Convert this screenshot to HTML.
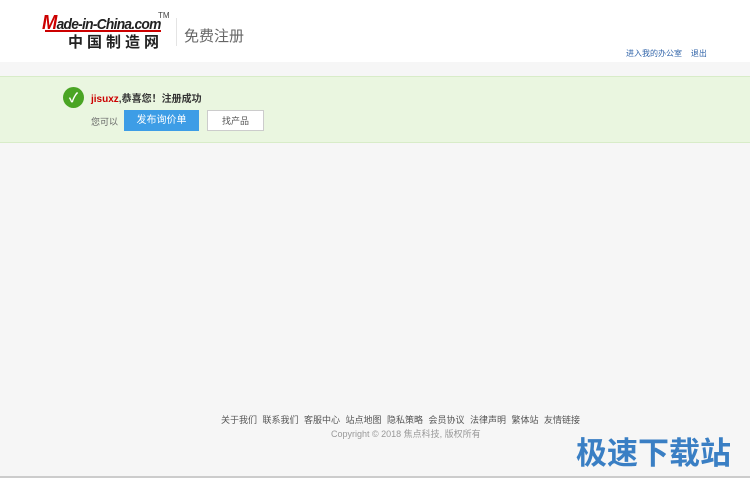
<!DOCTYPE html>
<html><head><meta charset="utf-8"><style>
body{margin:0;width:750px;height:478px;background:#f6f6f6;font-family:"Liberation Sans","Noto Sans CJK SC",sans-serif;position:relative;overflow:hidden}
.hd{position:absolute;left:0;top:0;width:750px;height:62px;background:#fff}
.a{position:absolute;white-space:nowrap}
.band{position:absolute;left:0;top:76px;width:750px;height:65px;background:#eaf6e0;border-top:1px solid #d8ecc8;border-bottom:1px solid #d8ecc8}
</style></head><body>
<div class="hd">
 <div class="a" style="left:42px;top:12px;font:italic bold 15px 'Liberation Sans';color:#222;letter-spacing:-0.8px;transform:scaleX(0.92);transform-origin:left"><span style="color:#c00;font-size:20px">M</span>ade-in-China.com</div>
 <div class="a" style="left:158px;top:11px;font-size:8px;color:#444">TM</div>
 <div class="a" style="left:45px;top:30px;width:116px;height:2px;background:#c00"></div>
 <div class="a" style="left:68px;top:31px;font-size:15px;font-weight:bold;color:#222;letter-spacing:4px">中国制造网</div>
 <div class="a" style="left:176px;top:18px;width:1px;height:28px;background:#e4e4e4"></div>
 <div class="a" style="left:184px;top:25px;font-size:15px;color:#666">免费注册</div>
 <div class="a" style="left:626px;top:48px;font-size:8px;color:#3366aa">进入我的办公室&nbsp;&nbsp;&nbsp;&nbsp;退出</div>
</div>
<div class="band">
 <div class="a" style="left:63px;top:10px;width:21px;height:21px;border-radius:50%;background:#4aa524;color:#fff;font-size:13px;text-align:center;line-height:21px;font-weight:bold">✓</div>
 <div class="a" style="left:91px;top:13px;font-size:10px;font-weight:bold;color:#333"><span style="color:#c00">jisuxz</span>,恭喜您！注册成功</div>
 <div class="a" style="left:91px;top:38px;font-size:9px;color:#666">您可以</div>
 <div class="a" style="left:124px;top:33px;width:75px;height:21px;background:#3d9de6;color:#fff;font-size:10px;text-align:center;line-height:22px">发布询价单</div>
 <div class="a" style="left:207px;top:33px;width:55px;height:19px;background:#fff;border:1px solid #ccc;color:#555;font-size:9px;text-align:center;line-height:20px">找产品</div>
</div>
<div class="a" style="left:221px;top:413px;font-size:9px;color:#555;word-spacing:3px">关于我们 联系我们 客服中心 站点地图 隐私策略 会员协议 法律声明 繁体站 友情链接</div>
<div class="a" style="left:331px;top:427px;font-size:9px;color:#999">Copyright © 2018 焦点科技, 版权所有</div>
<div class="a" style="left:576px;top:428px;font-size:31px;font-weight:bold;color:#3a7fc4">极速下载站</div>
<div class="a" style="left:0;top:476px;width:750px;height:2px;background:#ccc"></div>
</body></html>
